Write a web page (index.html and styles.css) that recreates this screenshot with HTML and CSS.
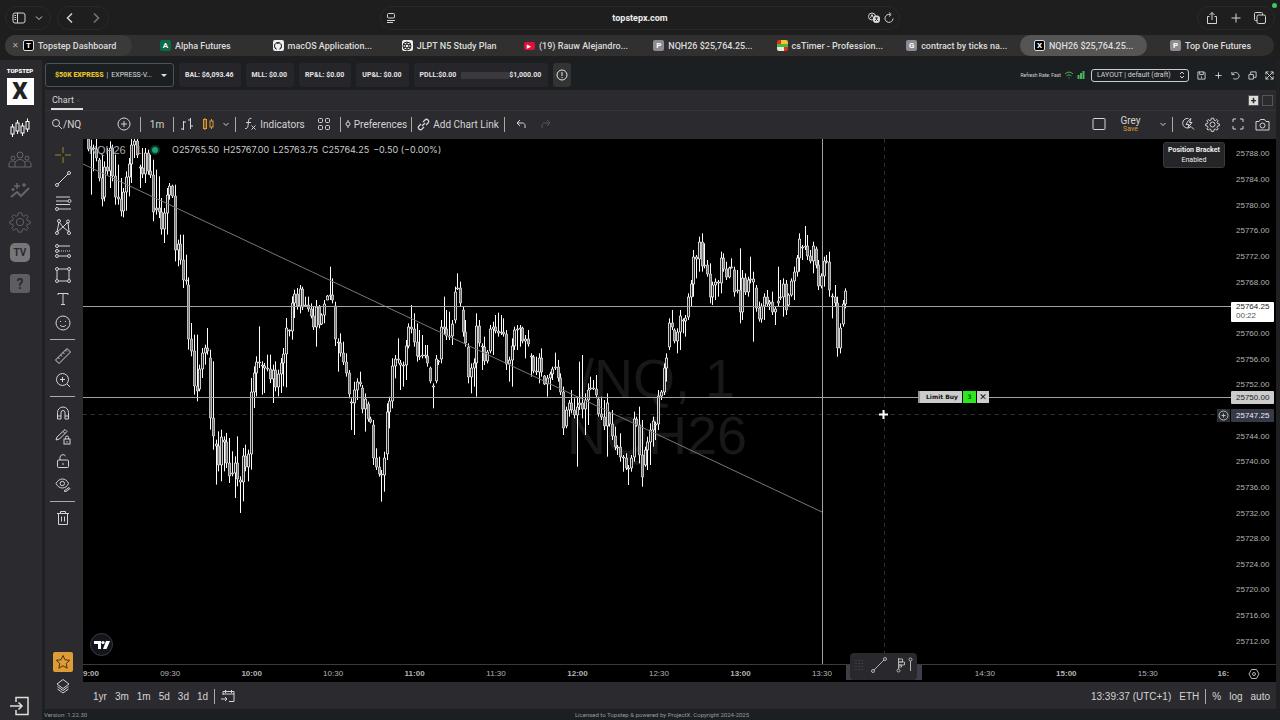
FILE: index.html
```html
<!DOCTYPE html>
<html lang="en">
<head>
    <meta charset="UTF-8">
    <meta name="viewport" content="width=device-width, initial-scale=1.0">
    <title>NQH26 $25,764.25</title>
    <link rel="stylesheet" href="styles.css">
</head>
<body>
    <!-- browser bar -->
    <header class="browser">
        <div class="browser-side">
            <div class="pill">
                <button aria-label="Sidebar"><svg width="14" height="14" viewBox="0 0 14 14"><rect x="1" y="2" width="12" height="10" rx="2"/><path d="M5.500 2v10M2.500 4.500h1.500M2.500 6.500h1.500M2.500 8.500h1.500"/></svg></button>
                <button aria-label="Tab groups"><svg width="10" height="10" viewBox="0 0 10 10"><path d="M2 3.500l3 3 3-3"/></svg></button>
            </div>
            <div class="pill nav-pill">
                <button aria-label="Back"><svg width="12" height="12" viewBox="0 0 12 12"><path d="M8 1.500L3.500 6 8 10.500" stroke-width="1.500"/></svg></button>
                <button aria-label="Forward" class="dim"><svg width="12" height="12" viewBox="0 0 12 12"><path d="M4 1.500L8.500 6 4 10.500" stroke-width="1.500"/></svg></button>
            </div>
        </div>
        <div class="address">
            <svg width="12" height="12" viewBox="0 0 12 12"><rect x="2.500" y="1.500" width="7" height="4.500" rx="1"/><path d="M2 8.500h8M2 10.500h6"/></svg>
            <span class="host">topstepx.com</span>
            <div class="address-end">
                <svg width="14" height="12" viewBox="0 0 14 12"><circle cx="5" cy="4.500" r="3.500"/><path d="M3.500 6l1.500-3.500L6.500 6"/><rect x="6.500" y="4" width="6" height="6.500" rx="2" fill="#ddd"/><path d="M8 6h3M9.500 5.500V7.500L8 9M9.500 7.500L11 9" stroke="#333"/></svg>
                <svg width="12" height="12" viewBox="0 0 12 12"><path d="M10 6.500a4 4 0 1 1-3-4M6 .500l2.200 2-2.200 2"/></svg>
            </div>
        </div>
        <div class="browser-side right">
            <div class="pill">
                <button aria-label="Share"><svg width="14" height="14" viewBox="0 0 14 14"><path d="M4.500 5.500H2.500v7h9v-7h-2M7 9V1.500M4.500 4L7 1.500 9.500 4"/></svg></button>
                <button aria-label="New tab"><svg width="14" height="14" viewBox="0 0 14 14"><path d="M7 2.500v9M2.500 7h9"/></svg></button>
                <button aria-label="Tab overview"><svg width="14" height="14" viewBox="0 0 14 14"><rect x="4" y="4" width="8.500" height="8.500" rx="1.500"/><path d="M4 9.500H2.500a1 1 0 0 1-1-1v-6a1 1 0 0 1 1-1h6a1 1 0 0 1 1 1V4"/></svg></button>
            </div>
            <i class="live-dot"></i>
        </div>
    </header>

    <nav class="tabs">
        <a href="#" class="tab pinned"><span class="close">✕</span><b class="fav fav-black">T</b>Topstep Dashboard</a>
        <a href="#" class="tab"><b class="fav fav-green">A</b>Alpha Futures</a>
        <a href="#" class="tab"><b class="fav fav-white"><svg width="10" height="10" viewBox="0 0 10 10"><circle cx="5" cy="5" r="4.500" fill="#222"/><path d="M3.500 9V7.500C1.500 6 2 4 2.500 3.500V2l1.300.7h2.400L7.500 2v1.500C8 4 8.500 6 6.500 7.500V9z" fill="#eee" stroke="none"/></svg></b>macOS Application...</a>
        <a href="#" class="tab"><b class="fav fav-white"><svg width="10" height="10" viewBox="0 0 10 10" class="ink"><circle cx="5" cy="5" r="2"/><circle cx="5" cy="5" r="4"/><path d="M5 1v3M5 6v3M1.500 3l2 1M8.500 3l-2 1M1.500 7l2-1M8.500 7l-2-1"/></svg></b>JLPT N5 Study Plan</a>
        <a href="#" class="tab"><b class="fav fav-red">▶</b>(19) Rauw Alejandro...</a>
        <a href="#" class="tab"><b class="fav fav-grey">P</b>NQH26 $25,764.25...</a>
        <a href="#" class="tab"><svg class="fav" width="11" height="11" viewBox="0 0 11 11" shape-rendering="crispEdges"><path d="M0 0h4v4H0z" fill="#e03020" stroke="none"/><path d="M4 0h7v4H4z" fill="#f2c230" stroke="none"/><path d="M0 4h11v3H0z" fill="#46b83c" stroke="none"/><path d="M0 7h7v4H0z" fill="#e8e8d0" stroke="none"/><path d="M7 7h4v4H7z" fill="#e03020" stroke="none"/></svg>csTimer - Profession...</a>
        <a href="#" class="tab"><b class="fav fav-grey">G</b>contract by ticks na...</a>
        <a href="#" class="tab active"><b class="fav fav-black">X</b>NQH26 $25,764.25...</a>
        <a href="#" class="tab"><b class="fav fav-grey">P</b>Top One Futures</a>
    </nav>

    <div class="app">
        <aside class="sidebar">
            <div class="logo"><span>TOPSTEP</span><b>X</b></div>
            <a href="#" class="on" aria-label="Trade"><svg width="22" height="22" viewBox="0 0 22 22"><path d="M3.500 7v3M3.500 17v3M8.500 3v3M8.500 14v3M13.500 6v3M13.500 16v3M18.500 1.500v3M18.500 12v3"/><rect x="2" y="10" width="3" height="7"/><rect x="7" y="6" width="3" height="8"/><rect x="12" y="9" width="3" height="7"/><rect x="17" y="4.500" width="3" height="7.500"/></svg></a>
            <a href="#" aria-label="Community"><svg width="24" height="22" viewBox="0 0 24 22"><circle cx="12" cy="6" r="3"/><circle cx="5" cy="9" r="2"/><circle cx="19" cy="9" r="2"/><path d="M7 18v-3c0-6 10-6 10 0v3zM7 18H1v-3c0-3 4-4 6-2M17 18h6v-3c0-3-4-4-6-2"/></svg></a>
            <a href="#" aria-label="Stats"><svg width="22" height="22" viewBox="0 0 22 22"><path d="M2 17l6-5 4 4 8-8" stroke-width="2"/><path d="M8 3v6M5 6h6M15 3v4M13 5h4M4 8v3M2.500 9.500h3" stroke-width="1.500"/></svg></a>
            <a href="#" aria-label="Settings"><svg width="22" height="22" viewBox="0 0 24 24"><use href="#gear"/></svg></a>
            <a href="#" class="tile-link">TV</a>
            <a href="#" class="tile-link help">?</a>
            <a href="#" class="exit" aria-label="Log out"><svg width="22" height="22" viewBox="0 0 22 22"><path d="M7 7V2.500h12v17H7V15M1 11h12M9.500 7.500L13 11l-3.500 3.500" stroke-width="1.500"/></svg></a>
        </aside>

        <main class="main">
            <div class="account-bar">
                <label class="account">
                    <b>$50K EXPRESS</b><span>|</span>
                    <select><option>EXPRESS-V...</option></select>
                </label>
                <span class="stat">BAL: $6,093.46</span>
                <span class="stat">MLL: $0.00</span>
                <span class="stat">RP&amp;L: $0.00</span>
                <span class="stat">UP&amp;L: $0.00</span>
                <span class="stat pdll">PDLL:$0.00<progress max="1000" value="0"></progress>$1,000.00</span>
                <button class="stat info" aria-label="Info"><svg width="12" height="12" viewBox="0 0 12 12"><circle cx="6" cy="6" r="5"/><path d="M6 3v4M6 8v1"/></svg></button>
                <div class="layout-tools">
                    <span class="refresh">Refresh Rate: Fast</span>
                    <svg class="green" width="10" height="10" viewBox="0 0 10 10"><path d="M1 4c2.500-2.500 5.500-2.500 8 0M2.500 6c1.500-1.500 3.500-1.500 5 0M4.500 8h1"/></svg>
                    <svg class="green" width="8" height="10" viewBox="0 0 8 10"><path d="M1.500 5v4M4 3v6M6.500 1v8" stroke-width="2"/></svg>
                    <label class="layout-select">
                        <select aria-label="Layout"><option>LAYOUT | default (draft)</option></select>
                        <svg width="6" height="8" viewBox="0 0 6 8"><path d="M1 3l2-2 2 2M1 5l2 2 2-2"/></svg>
                    </label>
                    <button aria-label="Save"><svg width="9" height="9" viewBox="0 0 10 10"><path d="M1 1h7l1 1v7H1zM3 1v3h4V1M5 6v2"/></svg></button>
                    <button aria-label="Add"><svg width="9" height="9" viewBox="0 0 10 10"><path d="M5 1.500v7M1.500 5h7"/></svg></button>
                    <button aria-label="Reset"><svg width="9" height="9" viewBox="0 0 10 10"><path d="M1 1v3h3M1.500 3.500C4 0 9 2 9 5.500S5 9.500 2.500 8.500"/></svg></button>
                    <button aria-label="Duplicate"><svg width="9" height="9" viewBox="0 0 10 10"><path d="M1 4h5v5H1zM3 3.500V1h6v6H6.500"/></svg></button>
                    <button aria-label="Expand"><svg width="9" height="9" viewBox="0 0 10 10"><path d="M1 4V1h3M6 1h3v3M9 6v3H6M4 9H1V6M1 1l8 8M9 1L1 9"/></svg></button>
                </div>
            </div>

            <div class="panel-tabs">
                <a href="#" class="panel-tab">Chart <small>×</small></a>
                <button class="add-panel" aria-label="Add panel">+</button>
                <button class="box-panel" aria-label="Maximize"></button>
            </div>

            <div class="toolbar">
                <label class="symbol"><svg width="12" height="12" viewBox="0 0 12 12"><circle cx="5" cy="5" r="3.500"/><path d="M7.500 7.500L11 11"/></svg><input type="text" value="/NQ" aria-label="Symbol"></label>
                <button class="w28" aria-label="Compare"><svg width="14" height="14" viewBox="0 0 14 14"><circle cx="7" cy="7" r="6"/><path d="M7 4v6M4 7h6"/></svg></button>
                <i class="sep"></i>
                <button class="w28">1m</button>
                <i class="sep"></i>
                <button class="w22" aria-label="Bars"><svg width="14" height="14" viewBox="0 0 14 14"><path d="M3.500 4v9M1 12h2.500M3.500 5H6M10.500 1v11M8 3h2.500M10.500 9H13"/></svg></button>
                <button class="w22 orange" aria-label="Candles"><svg width="14" height="14" viewBox="0 0 14 14"><path d="M4 1v12M10.500 2v2M10.500 10v2"/><rect x="2.500" y="2.500" width="3" height="9" fill="#7a5216"/><rect x="9" y="4" width="3" height="6"/></svg></button>
                <button class="w14" aria-label="More chart types"><svg width="8" height="8" viewBox="0 0 8 8"><path d="M1.500 3L4 5.500 6.500 3"/></svg></button>
                <i class="sep"></i>
                <button class="w72"><svg width="14" height="14" viewBox="0 0 14 14"><path d="M8.500 1.500C6 .500 5.500 3 5.300 6S5 12 2 11.500M3 5.500h5M8.500 8.500l4 4M12.500 8.500l-4 4"/></svg>Indicators</button>
                <button class="w28" aria-label="Templates"><svg width="14" height="14" viewBox="0 0 14 14"><rect x="1.500" y="1.500" width="4" height="4" rx="1"/><rect x="8.500" y="1.500" width="4" height="4" rx="1"/><rect x="1.500" y="8.500" width="4" height="4" rx="1"/><rect x="8.500" y="8.500" width="4" height="4" rx="1"/></svg></button>
                <i class="sep"></i>
                <button class="w66"><svg width="6" height="8" viewBox="0 0 6 8"><circle cx="3" cy="4" r="2"/><path d="M3 0v2M3 6v2"/></svg>Preferences</button>
                <i class="sep"></i>
                <button class="w88"><svg width="13" height="13" viewBox="0 0 13 13"><path d="M5 8l3-3M6 4l2-2c2-2 5 1 3 3L9 7M7 9l-2 2c-2 2-5-1-3-3l2-2" stroke-width="1.200"/></svg>Add Chart Link</button>
                <i class="sep"></i>
                <button class="w28" aria-label="Undo"><svg width="10" height="10" viewBox="0 0 10 10"><path d="M4 1L1 4l3 3M1 4h5.500C8 4 9 5 9 6.500V9"/></svg></button>
                <button class="w22 faint" aria-label="Redo"><svg width="10" height="10" viewBox="0 0 10 10"><path d="M6 1l3 3-3 3M9 4H3.500C2 4 1 5 1 6.500V9"/></svg></button>
                <div class="toolbar-right">
                    <button aria-label="Layout"><svg width="14" height="14" viewBox="0 0 14 14"><rect x="1" y="1.500" width="12" height="11" rx="1"/></svg></button>
                    <button class="template">Grey<small>Save</small></button>
                    <button class="w14" aria-label="Templates"><svg width="8" height="8" viewBox="0 0 8 8"><path d="M1.500 3L4 5.500 6.500 3"/></svg></button>
                    <i class="sep"></i>
                    <button class="w26" aria-label="Quick search"><svg width="14" height="14" viewBox="0 0 14 14"><path d="M7.500 1.500A4.800 4.800 0 1 0 10 9.500l3 3M7.500 3.500L5 7.500h3l-1 3 4-5H8.500l1.500-4z"/></svg></button>
                    <button class="w26" aria-label="Settings"><svg width="15" height="15" viewBox="0 0 24 24"><use href="#gear" stroke-width="1.600"/></svg></button>
                    <button class="w26" aria-label="Fullscreen"><svg width="12" height="12" viewBox="0 0 12 12"><path d="M1 4V1h3M8 1h3v3M11 8v3H8M4 11H1V8"/></svg></button>
                    <button class="w26" aria-label="Snapshot"><svg width="15" height="13" viewBox="0 0 15 13"><path d="M1 3.500h3l1.500-2h4l1.500 2h3v8.500H1z"/><circle cx="7.500" cy="7.500" r="2.500"/></svg></button>
                </div>
            </div>

            <div class="work">
                <div class="draw-tools">
                    <button class="gold" aria-label="Cross"><svg width="18" height="18" viewBox="0 0 18 18"><path d="M9 1v6M9 11v6M1 9h6M11 9h6"/></svg></button>
                    <button aria-label="Trend line"><svg width="18" height="18" viewBox="0 0 18 18"><use href="#trend"/></svg></button>
                    <button aria-label="Fib"><svg width="18" height="18" viewBox="0 0 18 18"><path d="M2 3h14M2 7h12M2 10.500h14M5 15h12"/><circle cx="15.500" cy="7" r="1.500"/><circle cx="3" cy="15" r="1.500"/></svg></button>
                    <button aria-label="Patterns"><svg width="18" height="18" viewBox="0 0 18 18"><path d="M3 14L5 4l4 5 5-5 1 10-6-5z"/><circle cx="3" cy="15" r="1.500"/><circle cx="5" cy="3" r="1.500"/><circle cx="14" cy="3.500" r="1.500"/><circle cx="15" cy="15" r="1.500"/></svg></button>
                    <button aria-label="Forecast"><svg width="18" height="18" viewBox="0 0 18 18"><path d="M4.500 4H16M4.500 14H13.500"/><path d="M5 9h11" stroke-dasharray="1 1"/><circle cx="3" cy="4" r="1.500"/><circle cx="3" cy="9" r="1.500"/><circle cx="3" cy="14" r="1.500"/><circle cx="15" cy="14" r="1.500"/></svg></button>
                    <button aria-label="Shapes"><svg width="18" height="18" viewBox="0 0 18 18"><path d="M4.500 3h9M4.500 15h9M3 4.500v9M15 4.500v9"/><circle cx="3" cy="3" r="1.500"/><circle cx="15" cy="3" r="1.500"/><circle cx="3" cy="15" r="1.500"/><circle cx="15" cy="15" r="1.500"/></svg></button>
                    <button aria-label="Text"><svg width="18" height="18" viewBox="0 0 18 18"><path d="M4 5V3.500h10V5M9 3.500v11M7 14.500h4"/></svg></button>
                    <button aria-label="Emoji"><svg width="18" height="18" viewBox="0 0 18 18"><circle cx="9" cy="9" r="7"/><path d="M6.500 7v1M11.500 7v1M6 11c1.500 2 4.500 2 6 0"/></svg></button>
                    <hr>
                    <button aria-label="Ruler"><svg width="18" height="18" viewBox="0 0 18 18"><path d="M1.500 13L13 1.500 16.500 5 5 16.500zM4 10.500l1.500 1.500M6.500 8L8 9.500M9 5.500L10.500 7M11.500 3L13 4.500"/></svg></button>
                    <button aria-label="Zoom in"><svg width="18" height="18" viewBox="0 0 18 18"><circle cx="8.500" cy="8.500" r="6"/><path d="M8.500 6v5M6 8.500h5M13 13l3 3"/></svg></button>
                    <hr>
                    <button aria-label="Magnet"><svg width="18" height="18" viewBox="0 0 18 18"><path d="M3.500 15V8.500a5.500 5.500 0 0 1 11 0V15H11V8.500a2 2 0 0 0-4 0V15zM3.500 12H7M11 12h3.500"/></svg></button>
                    <button aria-label="Stay in drawing mode"><svg width="18" height="18" viewBox="0 0 18 18"><path d="M2 12l1-3 8-7.500 2 2L5.500 11zM9 3.500l2 2"/><rect x="10" y="11" width="6" height="5"/><path d="M11.500 11V9.500a1.500 1.500 0 0 1 3 0V11M13 13v1.500"/></svg></button>
                    <button aria-label="Lock"><svg width="18" height="18" viewBox="0 0 18 18"><rect x="3.500" y="8" width="11" height="7.500" rx="1"/><path d="M6 8V5.500a3 3 0 0 1 5.500-1.500M9 11v2"/></svg></button>
                    <button aria-label="Hide drawings"><svg width="18" height="18" viewBox="0 0 18 18"><path d="M2 7.500c3-6 10-6 12.500 0-2.500 6-9.500 6-12.500 0z"/><circle cx="8.300" cy="7.500" r="2.200"/><path d="M10 15l5-3.500 1 1-4 3z"/></svg></button>
                    <hr>
                    <button aria-label="Delete"><svg width="18" height="18" viewBox="0 0 18 18"><path d="M3 4.500h12M6.500 4.500v-2h5v2M4.500 4.500v11h9v-11M7.500 7.500v5M10.500 7.500v5"/></svg></button>
                    <button class="star" aria-label="Favorites"><svg width="16" height="16" viewBox="0 0 16 16"><path d="M8 1.500l2 4.300 4.700.500-3.500 3.200 1 4.700L8 11.800l-4.200 2.400 1-4.700L1.300 6.300 6 5.800z"/></svg></button>
                    <button aria-label="Object tree"><svg width="16" height="16" viewBox="0 0 16 16"><path d="M8 1.500L14 6l-6 4.500L2 6zM2.500 8.500L8 12.500l5.500-4M2.500 11L8 15l5.500-4"/></svg></button>
                </div>

                <div class="chart-col">
                    <div class="chart">
                        <div class="plot">
                            <div class="watermark">/NQ, 1<br>NQH26</div>
                            <svg id="plot" viewBox="0 0 1148 525" preserveAspectRatio="none">
                                <path class="hair" d="M0 275.500h1136M801.500 0v525"/>
                                <path id="wicks" class="wicks"/>
                                <path id="falling" class="falling"/>
                                <path id="rising" class="rising"/>
                                <path class="trend" d="M0 25L740 373.500"/>
                                <path class="level" d="M0 167.500h1148M0 258.500h1148M739.500 0v525"/>
                                <path class="pointer" d="M800.500 271v9M796 275.500h9"/>
                            </svg>
                            <div class="legend">
                                <span class="ticker">NQH26 · 1</span><i></i>
                                <span>O25765.50</span><span>H25767.00</span><span>L25763.75</span><span>C25764.25</span><span>−0.50 (−0.00%)</span>
                            </div>
                            <div class="bracket"><b>Position Bracket</b>Enabled</div>
                            <div class="limit">
                                <span>Limit Buy</span><b>3</b><button aria-label="Cancel order">✕</button>
                            </div>
                            <button class="plus" aria-label="Add order"><svg width="11" height="11" viewBox="0 0 11 11"><circle cx="5.500" cy="5.500" r="4.500"/><path d="M5.500 3.500v4M3.500 5.500h4"/></svg></button>
                            <a href="#" class="tv" aria-label="TradingView"><svg width="16" height="10" viewBox="0 0 16 10"><path d="M0 1h7v8H4V4H0zM12 1h4l-3.500 8h-3.500z"/><circle cx="9" cy="2.500" r="1.600"/></svg></a>
                        </div>
                        <div class="prices">
                            <span>25788.00</span><span>25784.00</span><span>25780.00</span><span>25776.00</span><span>25772.00</span>
                            <span>25768.00</span><span></span><span>25760.00</span><span>25756.00</span><span>25752.00</span>
                            <span></span><span>25744.00</span><span>25740.00</span><span>25736.00</span><span>25732.00</span>
                            <span>25728.00</span><span>25724.00</span><span>25720.00</span><span>25716.00</span><span>25712.00</span>
                            <div class="tag last">25764.25<small>00:22</small></div>
                            <div class="tag limit-price">25750.00</div>
                            <div class="tag cursor-price">25747.25</div>
                        </div>
                    </div>
                    <div class="time-axis">
                        <div class="times">
                            <div>
                                <b>9:00</b><span>09:30</span><b>10:00</b><span>10:30</span><b>11:00</b><span>11:30</span><b>12:00</b><span>12:30</span><b>13:00</b><span>13:30</span><b></b><span>14:30</span><b>15:00</b><span>15:30</span><b>16:</b>
                            </div>
                        </div>
                        <button aria-label="Axis settings"><svg width="12" height="12" viewBox="0 0 12 12"><path d="M3.500 1.500h5L11 6l-2.500 4.500h-5L1 6z"/><circle cx="6" cy="6" r="1.500"/></svg></button>
                        <div class="favorites">
                            <div>
                                <svg width="8" height="12" viewBox="0 0 8 12"><path d="M1 1v10M4 1v10M7 1v10" stroke-dasharray="1 2" stroke="#555"/></svg>
                                <svg width="18" height="18" viewBox="0 0 18 18"><use href="#trend"/></svg>
                                <svg width="18" height="18" viewBox="0 0 18 18"><path d="M3.500 2v11M3.500 3h4v3h-4M3.500 6h6v3h-6M3.500 9h3v2h-3M15.500 5v10"/><circle cx="3.500" cy="14.500" r="1.500"/><circle cx="15.500" cy="3.500" r="1.500"/></svg>
                            </div>
                        </div>
                    </div>
                    <div class="range-bar">
                        <button>1yr</button><button>3m</button><button>1m</button><button>5d</button><button>3d</button><button>1d</button>
                        <i class="sep"></i>
                        <button aria-label="Go to date"><svg width="14" height="14" viewBox="0 0 14 14"><path d="M2 6V2.500h11v10H8M2 5h11M4.500 1v3M10.500 1v3M0 10h6M4 8l2 2-2 2"/></svg></button>
                        <span class="clock">13:39:37 (UTC+1)</span>
                        <button>ETH</button>
                        <i class="sep"></i>
                        <button>%</button><button>log</button><button>auto</button>
                    </div>
                </div>
            </div>

            <footer class="footer">
                <span>Version: 1.22.30</span>
                <span>Licensed to Topstep &amp; powered by ProjectX. Copyright 2024-2025</span>
                <span></span>
            </footer>
        </main>
    </div>

    <svg class="defs">
        <g id="trend"><circle cx="3" cy="15" r="1.500"/><circle cx="15" cy="3" r="1.500"/><path d="M4 14L14 4"/></g>
        <g id="gear"><circle cx="12" cy="12" r="4"/><path d="M10 2h4l.5 3 2 .8L19 4l2 2-1.800 2.500.8 2 3 .500v3l-3 .500-.8 2L21 19l-2 2-2.500-1.800-2 .8-.5 3h-4l-.5-3-2-.8L5 21l-2-2 1.800-2.500-.8-2L1 14v-3l3-.500.8-2L3 6l2-2 2.500 1.800 2-.8z"/></g>
    </svg>
    <script src="chart.js"></script>
</body>
</html>
```
FILE: styles.css
```css
:root {
    --panel: #2b2a2e;
    --band: #1b1f22;
    --text: #d4d4d6;
    --orange: #dd9c35;
}

* {
    box-sizing: border-box;
}

body {
    display: flex;
    flex-direction: column;
    min-height: 100vh;
    margin: 0;
    background: #1e1e1e;
    color: var(--text);
    font-family: Roboto, "Liberation Sans", sans-serif;
    font-size: 10px;
}

button, input, select {
    margin: 0;
    padding: 0;
    border: 0;
    background: none;
    color: inherit;
    font: inherit;
}

button {
    display: flex;
    align-items: center;
    justify-content: center;
    cursor: pointer;
}

a {
    color: inherit;
    text-decoration: none;
}

svg {
    flex: none;
    fill: none;
    stroke: currentColor;
}

.defs {
    position: absolute;
    width: 0;
    height: 0;
}

/* browser */
.browser {
    display: grid;
    grid-template-columns: 1fr 520px 1fr;
    align-items: center;
    height: 35px;
    padding: 0 5px;
}

.browser-side {
    display: flex;
    gap: 6px;
}

.browser-side.right {
    justify-content: flex-end;
}

.pill, .address {
    display: flex;
    align-items: center;
    height: 24px;
    border: 1px solid #292929;
    border-radius: 12px;
}

.pill {
    gap: 8px;
    padding: 0 6px;
}

.nav-pill {
    gap: 14px;
}

.right .pill {
    gap: 10px;
    padding: 0 7px;
}

.dim {
    color: #777;
}

.address {
    display: grid;
    grid-template-columns: 1fr auto 1fr;
    padding: 0 4px;
}

.address-end {
    display: flex;
    justify-content: flex-end;
    gap: 2px;
}

.host {
    color: #eee;
    font-size: 9px;
    font-weight: 700;
}

.live-dot {
    position: absolute;
    top: 3px;
    right: 3px;
    width: 5px;
    height: 5px;
    border-radius: 50%;
    background: #3fc65a;
}

.tabs {
    display: grid;
    grid-template-columns: repeat(10, 1fr);
    height: 21px;
    margin: 0 6px 4px 5px;
    border-radius: 11px;
    background: #303030;
}

.tab {
    display: flex;
    align-items: center;
    justify-content: center;
    gap: 4px;
    border-radius: 11px;
    color: #dcdcdc;
    font-size: 9px;
    font-weight: 500;
    white-space: nowrap;
}

.pinned {
    justify-content: flex-start;
    padding-left: 7px;
    background: #3a3a3a;
}

.tab.active {
    background: #555;
}

.close {
    color: #aaa;
    font-size: 8px;
}

.fav {
    display: flex;
    align-items: center;
    justify-content: center;
    width: 11px;
    height: 11px;
    border-radius: 2px;
    color: #fff;
    font-size: 8px;
}

.fav-black {
    border: 1px solid #ddd;
    background: #000;
}

.fav-green {
    background: #0c6b45;
}

.fav-white {
    background: #eee;
}

.ink {
    stroke: #222;
}

.fav-red {
    height: 8px;
    background: #e0103a;
    font-size: 5px;
}

.fav-grey {
    background: #8c8c90;
}

/* app frame */
.app {
    display: flex;
    flex: 1;
    background: #202023;
}

.sidebar {
    display: flex;
    flex-direction: column;
    align-items: center;
    width: 42px;
    padding: 6px 2px 0 0;
    background: var(--panel);
    color: #66666a;
}

.sidebar a {
    display: flex;
    align-items: center;
    justify-content: center;
    height: 31px;
}

.sidebar .on {
    height: 32px;
    margin-top: 7px;
    color: #fff;
}

.logo {
    display: flex;
    flex-direction: column;
    align-items: center;
    gap: 2px;
    color: #fff;
    font-size: 6px;
    font-weight: 900;
    line-height: 10px;
}

.logo b {
    width: 27px;
    background: #fff;
    color: #222;
    font-size: 24px;
    line-height: 27px;
    text-align: center;
}

.sidebar .tile-link {
    width: 20px;
    height: 19px;
    margin: 6px 0;
    border-radius: 5px;
    background: #77777b;
    color: var(--panel);
    font-weight: 700;
}

.sidebar .help {
    border-radius: 3px;
    background: #5e5e62;
    font-size: 14px;
}

.sidebar .exit {
    margin-top: auto;
    height: 28px;
    color: #ddd;
}

.main {
    display: flex;
    flex: 1;
    flex-direction: column;
    min-width: 0;
    padding: 0 4px 0 3px;
}

/* account line */
.account-bar {
    display: flex;
    align-items: center;
    gap: 5px;
    height: 30px;
    background: var(--band);
    font-size: 7px;
    font-weight: 700;
}

.account {
    display: flex;
    align-items: center;
    gap: 3px;
    width: 129px;
    height: 24px;
    padding: 0 6px 0 9px;
    border: 1px solid #4a5356;
    border-radius: 3px;
    color: #ddd;
}

.account b {
    color: #e6c229;
}

.account span {
    font-weight: 400;
}

.account select {
    flex: 1;
    min-width: 0;
    appearance: none;
    font-weight: 400;
}

.account::after {
    border: 3px solid transparent;
    border-top-color: #ddd;
    border-bottom: 0;
    content: "";
}

.stat {
    display: flex;
    align-items: center;
    height: 24px;
    padding: 0 7px 0 6px;
    border-radius: 3px;
    background: #26262a;
    color: #e4e4e4;
    white-space: nowrap;
}

.pdll progress {
    width: 48px;
    height: 7px;
    margin: 0 0 0 5px;
    border: 0;
    appearance: none;
    background: #3a3a3e;
}

.pdll progress::-webkit-progress-bar {
    background: #3a3a3e;
}

.info {
    padding: 0 3px;
    background: #333;
}

.layout-tools {
    display: flex;
    align-items: center;
    gap: 3px;
    margin-left: auto;
    font-weight: 400;
}

.refresh {
    font-size: 5px;
}

.green {
    color: #47b45e;
}

.layout-select {
    display: flex;
    align-items: center;
    width: 98px;
    height: 13px;
    margin: 0 2px 0 3px;
    padding: 0 3px 0 5px;
    border: 1px solid #ccc;
    border-radius: 3px;
}

.layout-select select {
    flex: 1;
    appearance: none;
}

.layout-tools button {
    width: 14px;
}

/* chart tab */
.panel-tabs {
    display: flex;
    align-items: center;
    gap: 3px;
    height: 21px;
    padding: 0 3px 0 6px;
    border-bottom: 1px solid #353438;
    background: var(--panel);
}

.panel-tab {
    align-self: stretch;
    margin-right: auto;
    padding: 1px 3px 0 1px;
    border-bottom: 2px solid #ddd;
    font-size: 9px;
    line-height: 18px;
}

.panel-tab small {
    color: #444;
}

.add-panel, .box-panel {
    width: 11px;
    height: 11px;
    border: 1px solid #555;
}

.add-panel {
    border-radius: 1px;
    background: #ddd;
    color: #222;
    font-weight: 700;
}

/* chart toolbar */
.toolbar {
    display: flex;
    align-items: center;
    height: 28px;
    padding: 0 1px 2px 6px;
    background: var(--panel);
}

.toolbar button {
    gap: 3px;
    height: 24px;
    white-space: nowrap;
}

.symbol {
    display: flex;
    align-items: center;
    width: 59px;
}

.symbol input {
    width: 40px;
    outline: 0;
}

.w14 { width: 15px; }
.w22 { width: 21px; }
.w26 { width: 25px; }
.w28 { width: 28px; }
.w66 { width: 66px; }
.w72 { width: 72px; }
.w88 { width: 88px; }

.faint {
    color: #55555a;
}

.orange {
    color: var(--orange);
}

.sep {
    width: 1px;
    height: 15px;
    margin: 0 2px;
    background: #aaa;
}

.toolbar-right {
    display: flex;
    align-items: center;
    margin-left: auto;
}

.toolbar .template {
    flex-direction: column;
    gap: 0;
    width: 49px;
    line-height: 10px;
}

.template small {
    color: var(--orange);
    font-size: 7px;
    line-height: 7px;
}

/* drawing tools */
.work {
    display: flex;
    flex: 1;
    background: var(--panel);
}

.draw-tools {
    display: flex;
    flex-direction: column;
    align-items: center;
    width: 38px;
    padding: 4px 3px 11px 0;
}

.draw-tools button {
    width: 24px;
    height: 24px;
}

.draw-tools hr {
    width: 25px;
    height: 1px;
    margin: 4px 0;
    border: 0;
    background: #aaa;
}

.gold {
    color: #a08030;
}

.draw-tools .star {
    width: 20px;
    height: 20px;
    margin: auto 0 2px;
    border-radius: 2px;
    background: var(--orange);
    color: #4a3210;
}

/* chart */
.chart-col {
    display: flex;
    flex: 1;
    flex-direction: column;
    min-width: 0;
}

.chart {
    display: flex;
    flex: 1;
    background: #000;
}

.plot {
    position: relative;
    flex: 1;
    overflow: hidden;
}

.plot #plot {
    position: absolute;
    width: 100%;
    height: 100%;
}

.watermark {
    position: absolute;
    top: 51%;
    width: 100%;
    color: #181818;
    font-family: "Liberation Sans", sans-serif;
    font-size: 54px;
    line-height: 57px;
    text-align: center;
    transform: translateY(-50%);
}

.wicks {
    stroke: #fff;
}

.falling {
    fill: #777;
    stroke: #ddd;
    stroke-width: .8;
}

.rising {
    fill: #222;
    stroke: #fff;
    stroke-width: .8;
}

.trend {
    stroke: #777;
}

.level {
    stroke: #a2a2a2;
}

.hair {
    stroke: #303030;
    stroke-dasharray: 4 4;
}

.pointer {
    stroke: #fff;
    stroke-width: 2;
}

.legend {
    position: absolute;
    top: 4px;
    left: 6px;
    display: flex;
    align-items: center;
    gap: 4px;
    color: #ccc;
    font-family: Inter, sans-serif;
    font-size: 9px;
    line-height: 14px;
}

.legend .ticker {
    width: 56px;
    color: #aaa;
    font-family: "Liberation Sans", sans-serif;
    font-size: 11px;
}

.legend i {
    width: 6px;
    height: 6px;
    margin: 0 10px 0 3px;
    border-radius: 50%;
    background: #22a07a;
    box-shadow: 0 0 0 2px #0c3528;
}

.bracket {
    position: absolute;
    top: 3px;
    right: 6px;
    width: 62px;
    padding: 2px 0;
    border: 1px solid #3a3a3e;
    border-radius: 3px;
    background: #252528;
    color: #eee;
    font-size: 7px;
    line-height: 10px;
    text-align: center;
}

.bracket b {
    display: block;
    white-space: nowrap;
}

.limit {
    position: absolute;
    top: 48%;
    left: 835px;
    display: flex;
    gap: 1px;
    background: #000;
    color: #111;
    font-family: "DejaVu Sans", sans-serif;
    font-size: 6px;
    font-weight: 700;
    line-height: 12px;
}

.limit span {
    width: 44px;
    padding-left: 6px;
    border-left: 2px solid #999;
    background: #ccc;
    white-space: nowrap;
}

.limit b {
    width: 13px;
    background: #2be81c;
    color: #0a5a06;
    text-align: center;
}

.limit button {
    width: 12px;
    background: #ccc;
    font-size: 9px;
}

.plus {
    position: absolute;
    top: 51%;
    right: 1px;
    width: 13px;
    height: 13px;
    margin-top: 2px;
    background: #2a2c36;
    color: #bbb;
}

.tv {
    position: absolute;
    bottom: 8px;
    left: 7px;
    display: flex;
    align-items: center;
    justify-content: center;
    width: 23px;
    height: 23px;
    border: 1px solid #3a3c46;
    border-radius: 50%;
    background: #14151c;
    color: #fff;
}

.tv svg {
    fill: #fff;
    stroke: none;
}

.prices {
    position: relative;
    display: flex;
    flex-direction: column;
    width: 45px;
    padding: 2px 6px 10px 5px;
    color: #b4b4b4;
    font-family: "Liberation Sans", sans-serif;
    font-size: 8px;
}

.prices > span {
    display: flex;
    flex: 1;
    align-items: center;
}

.tag {
    position: absolute;
    left: 0;
    width: 43px;
    padding-left: 5px;
    border-radius: 1px;
    line-height: 12px;
}

.last {
    top: 31%;
    padding-bottom: 2px;
    background: #fff;
    color: #222;
    line-height: 9px;
}

.last small {
    display: block;
    color: #555;
    font-size: 8px;
}

.limit-price {
    top: 48%;
    background: #ccc;
    color: #222;
    line-height: 13px;
}

.cursor-price {
    top: 51%;
    margin-top: 2px;
    background: #363a48;
    color: #eee;
    line-height: 13px;
}

.time-axis {
    position: relative;
    display: flex;
    align-items: center;
    height: 18px;
    border-top: 1px solid #3a3a3a;
    background: #000;
    color: #b4b4b4;
    font-family: "Liberation Sans", sans-serif;
    font-size: 8px;
}

.time-axis > button {
    width: 45px;
}

.times {
    flex: 1;
    overflow: hidden;
}

.times div {
    display: grid;
    grid-template-columns: repeat(15, 1fr);
    margin: 0 -39px 0 -35px;
    text-align: center;
}

/* labels at the two ends start inside the plot */
.times b:first-child {
    padding-left: 35px;
    text-align: left;
}

.times b:last-child {
    padding-left: 29px;
    text-align: left;
}

.favorites {
    position: absolute;
    bottom: 2px;
    left: 763px;
    padding: 0 5px 0 4px;
    background: #3f3d4c;
}

.favorites div {
    display: flex;
    align-items: center;
    gap: 7px;
    height: 27px;
    margin-top: -12px;
    padding: 0 4px 3px 5px;
    border-radius: 4px;
    background: #29292d;
}

.range-bar {
    display: flex;
    align-items: center;
    gap: 8px;
    height: 27px;
    padding: 1px 6px 0 10px;
    font-family: "Liberation Sans", sans-serif;
}

.range-bar .sep {
    margin: 0 -2px;
}

.clock {
    margin-left: auto;
}

.footer {
    display: grid;
    grid-template-columns: 1fr auto 1fr;
    height: 11px;
    margin: 0 -4px 0 -3px;
    padding-left: 2px;
    background: var(--band);
    color: #999;
    font-size: 6px;
    line-height: 11px;
}
```
FILE: chart.js
```javascript
// high-low of every one minute bar from 09:00, in thirds of a pixel from "top"
const blocks = [
    {
        top: -3,
        bars: '0-40 5-170 20-100 0-70 60-130 50-205 70-190 30-110 10-150 20-130 50-200 80-200 120-235 150-238 100-218 ' +
            '60-175 0-135 0-60 0-60 80-150 30-120 30-135 35-110 50-120 65-250 95-230 115-240 180-290 210-315 ' +
            '150-290 135-185 140-180 140-370 305-385 290-380 290-450 350-440 418-635 555-655 590-770 590-790 680-760 ' +
            '630-720 620-680 570-650 635-875 670-935 905-1040 880-1000 875-1030 895-1000 885-990 900-1035 940-1015 ' +
            '955-1080 895-1045 1015-1125 930-1090 920-1000 935-1030 720-995 685-810 655-775 565-690 670-770 675-765 ' +
            '650-700 650-735 680-795 670-760 695-775 660-765 630-745 540-748 575-595 475-605 455-540 450-515'
    },
    {
        top: 303,
        bars: '135-220 140-210 170-200 170-215 190-235 200-270 180-320 195-265 220-255 180-250 165-180 80-180 115-190 ' +
            '185-318 295-395 280-350 305-375 340-410 390-475 475-570 425-585 415-480 395-440 435-520 460-575 485-545 ' +
            '530-550 540-675 625-690 650-710 690-785 635-755 490-660 470-565 355-505 345-415 295-370 360-450 365-440 ' +
            '300-420 250-325 195-280 220-320 250-365 270-360 285-355 315-355 315-380 380-430 430-505 345-430 360-375 ' +
            '240-370 170-285 210-300 215-300 240-315 140-250 100-150 125-200 200-290 240-320 310-430 370-460 355-440 ' +
            '220-470 240-320 310-390 290-375 330-370 255-340 245-345 225-280 218-290 225-285 235-290 270-390 350-425 ' +
            '295-440 260-330 255-330 255-320 260-310 285-355 270-320 340-410 345-400 350-405 340-430 325-410 405-435 ' +
            '405-470'
    },
    {
        top: 183,
        bars: '515-570 500-540 458-510 480-545 520-585 560-705 620-685 600-650 570-640 595-655 590-800 485-630 465-655 ' +
            '580-705 550-675 530-570 540-570 525-595 590-650 590-660 600-690 580-770 635-680 630-720 680-750 735-765 ' +
            '700-785 765-815 760-810 795-855 765-815 635-785 650-680 620-790 660-860 740-800 710-810 670-795 650-740 ' +
            '665-720 570-690 570-600 490-585 460-545 355-450 330-390 385-430 385-460 330-450 355-400 345-410 280-360 ' +
            '240-320 150-290 165-235 110-215 100-215 130-205 180-230 190-310 245-315 235-300 240-290 155-280 160-215 ' +
            '185-240 200-235 175-205 200-290 210-280 145-370 210-360 220-285 230-290 170-250 215-425 255-335 305-365 ' +
            '310-368 280-360 270-320 300-330 275-345 320-375 200-320 240-300 235-350 240-345 280-320 235-290 200-300 ' +
            '165-230 100-215 135-180 78-150 105-180 150-190 125-220 140-205 180-270 220-265 170-260 165-190 155-290 ' +
            '280-355 255-320 290-470 370-460 300-380 265-325'
    }
];

const step = 2.715;
const bars = [];
blocks.forEach(block => {
    block.bars.split(' ').forEach(pair => {
        const [high, low] = pair.split('-').map(Number);
        bars.push({ high: (high + block.top) / 3, low: (low + block.top) / 3 });
    });
});

const clamp = (value, min, max) => Math.min(Math.max(value, min), max);
const paths = { wicks: '', falling: '', rising: '' };
let open = bars[0].high;

bars.forEach((bar, i) => {
    const x = Math.round(5 + i * step) + 0.5;
    const next = bars[i + 1] || bar;
    const range = bar.low - bar.high;
    // each bar closes towards where the next one trades
    const down = next.high + next.low > bar.high + bar.low;
    const close = down ? bar.low - range * 0.15 : bar.high + range * 0.15;
    const from = clamp(open, bar.high + range * 0.1, bar.low - range * 0.1);
    const top = Math.round(Math.min(from, close));
    const bottom = Math.round(Math.max(from, close, top + 1));

    paths.wicks += `M${x} ${bar.high}V${bar.low}`;
    paths[down ? 'falling' : 'rising'] += `M${x - 1} ${top}h2V${bottom}h-2z`;
    open = close;
});

Object.keys(paths).forEach(id => {
    document.getElementById(id).setAttribute('d', paths[id]);
});
```
